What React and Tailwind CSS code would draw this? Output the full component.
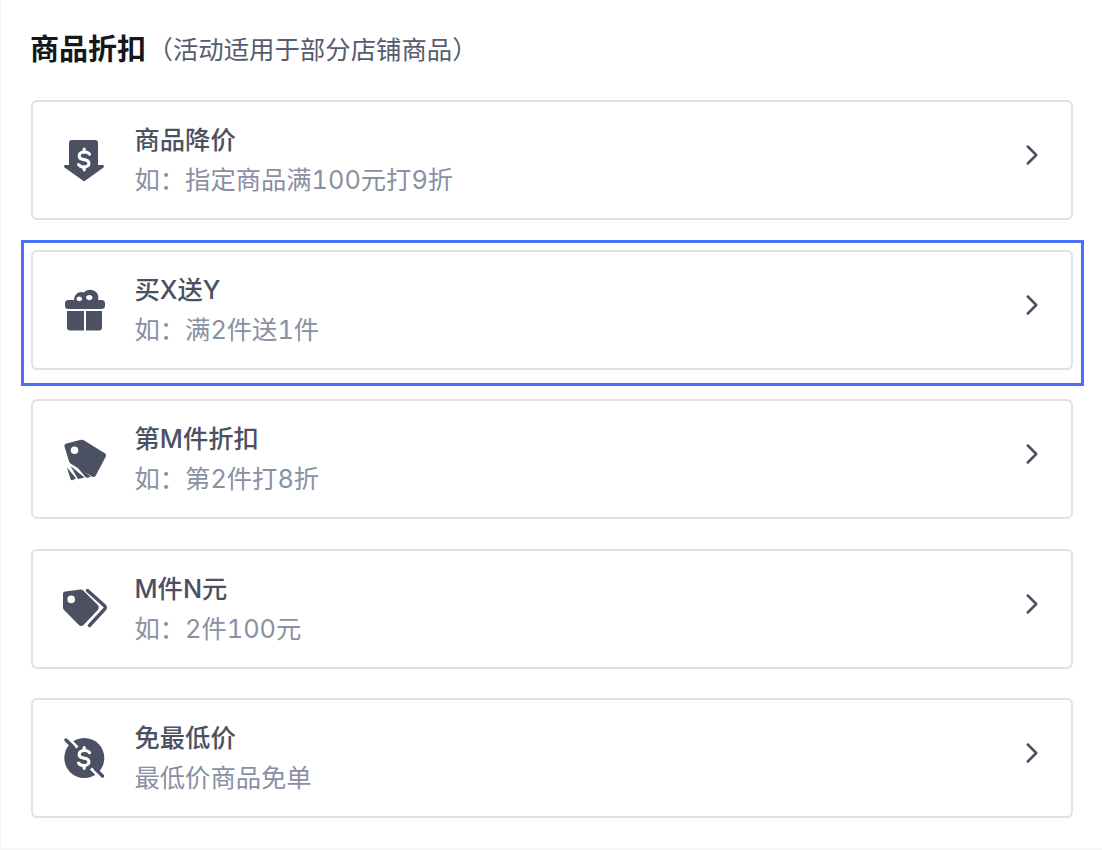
import { ChevronRight } from 'lucide-react'

const DollarMark = ({ cx, cy, color = '#fff' }) => (
  <g transform={`translate(${cx - 7} ${cy - 11.5})`} fill="none" stroke={color} strokeWidth="3.200" strokeLinecap="round" strokeLinejoin="round">
    <path d="M12.5 6.2C11.6 4.8 9.6 4 7.4 4 4.4 4 2.2 5.6 2.2 7.9c0 2.3 2 3.2 4.8 3.7 2.8.5 4.9 1.4 4.9 3.7 0 2.3-2.2 3.8-5 3.8-2.3 0-4.3-.9-5.3-2.4" />
    <path d="M7.2 1.2V4M7.2 19.1v2.7" />
  </g>
)

const PriceDownIcon = () => (
  <svg width="48" height="48" viewBox="0 0 48 48" fill="#4b5162">
    <path d="M12 4h23a3 3 0 0 1 3 3v22h4.500c1.300 0 1.900 1.500 1 2.400L25.500 44.500a2 2 0 0 1-2.600 0L4.500 31.400c-1-.9-.4-2.400 1-2.400H9V7a3 3 0 0 1 3-3z" />
    <DollarMark cx={24} cy={23.500} />
  </svg>
)

const GiftIcon = () => (
  <svg width="48" height="48" viewBox="0 0 48 48" fill="#4b5162">
    <path fillRule="evenodd" d="M8.500 14H14c.2-5.500 5-9.500 10-7.500C26.500 3.500 31 3 34.500 5c3.500 2 4.500 5.500 3.500 9h3.500a3.500 3.500 0 0 1 3.500 3.500v2a3.500 3.500 0 0 1-3.500 3.500h-33A3.500 3.500 0 0 1 5 19.500v-2A3.500 3.500 0 0 1 8.500 14zm10.800 1.200c1.500 0 2.800-1 2.800-2.400s-1.300-2.400-2.800-2.400-2.800 1-2.800 2.400 1.300 2.400 2.800 2.400zm10-1c1.800 0 3.200-1.100 3.200-2.600s-1.400-2.600-3.200-2.600-3.200 1.100-3.200 2.600 1.400 2.600 3.200 2.600z" />
    <path d="M7 25h17v19.500H10a3 3 0 0 1-3-3zM26 25h16v16.500a3 3 0 0 1-3 3H26z" />
  </svg>
)

const TagFanIcon = () => (
  <svg width="48" height="48" viewBox="0 0 48 48" fill="#4b5162">
    <path fillRule="evenodd" d="M6.500 8.500 21 4.800c1-.3 2-.1 2.800.5l21 13c1.200.8 1.600 2.300.9 3.500L35.800 40.500c-.8 1.400-2.500 1.900-3.900 1.100L10.500 28.500c-.7-.4-1.200-1.100-1.400-1.900L4.500 11.500c-.4-1.300.5-2.700 2-3zM14.500 19a3.800 3.800 0 1 0 0-7.600 3.800 3.800 0 0 0 0 7.600z" />
    <path d="M7 32.500 16 43.300l-3 1.700c-1 .5-2 .2-2.400-.8z" />
    <path d="m10.500 31 14 11.500-5 1.300c-.8.200-1.500 0-2-.6z" />
    <path d="m15 29.500 16 12.300-3.500.9c-.7.200-1.300 0-1.900-.4z" />
  </svg>
)

const TagPairIcon = () => (
  <svg width="48" height="48" viewBox="0 0 48 48" fill="#4b5162">
    <path fillRule="evenodd" d="M5 6.500 20.500 4.500c1-.1 2 .2 2.700.9L37.800 20c1.400 1.400 1.400 3.600 0 5L23.500 40c-1.300 1.300-3.300 1.300-4.600 0L4 25c-.7-.7-1-1.500-1-2.400V8.700c0-1.100.9-2 2-2.200zM11.200 18.200a3.800 3.800 0 1 0 0-7.600 3.800 3.800 0 0 0 0 7.600z" />
    <path d="m27.500 5.500 17 15.300c1 .9 1 2.600 0 3.500L29.500 40.500" fill="none" stroke="#4b5162" strokeWidth="3.400" strokeLinecap="round" />
  </svg>
)

const NoPriceIcon = () => (
  <svg width="48" height="48" viewBox="0 0 48 48">
    <circle cx="24.300" cy="24" r="20" fill="#4b5162" />
    <path d="M8.500 4.500 17.500 13.500M31 34.500 40 43.500" stroke="#fff" strokeWidth="3" />
    <path d="M6 6 13 13M35.500 35 42.500 42" stroke="#4b5162" strokeWidth="3.400" strokeLinecap="round" />
    <DollarMark cx={24} cy={24} />
  </svg>
)

const ITEMS = [
  { title: '商品降价', desc: '如：指定商品满100元打9折', Icon: PriceDownIcon },
  { title: '买X送Y', desc: '如：满2件送1件', Icon: GiftIcon, active: true },
  { title: '第M件折扣', desc: '如：第2件打8折', Icon: TagFanIcon },
  { title: 'M件N元', desc: '如：2件100元', Icon: TagPairIcon },
  { title: '免最低价', desc: '最低价商品免单', Icon: NoPriceIcon },
]

export default function App() {
  return (
    <div className="h-[850px] w-[1102px] overflow-hidden bg-[#f6f7f9] pb-[2px] pl-[1px] font-['Inter','Noto_Sans_CJK_SC',sans-serif]">
      <div className="h-[848px] bg-white pl-[30px] pr-[29px] pt-[30px]">
        {/* 标题 */}
        <div className="-ml-[1px] flex h-[40px] items-center leading-[40px]">
          <span className="text-[29px] font-semibold text-[#15171c]">商品折扣</span>
          <span className="ml-[1.500px] text-[25.400px] text-[#565c6c]">（活动适用于部分店铺商品）</span>
        </div>

        <div className="mt-[30px] flex flex-col gap-[29.500px]">
          {ITEMS.map(({ title, desc, Icon, active }) => (
            <div key={title} className="relative flex h-[120px] items-center rounded-[6px] border-2 border-[#dfe1ea] pl-[27px] pr-[22px]">
              {active && (
                <div className="pointer-events-none absolute -bottom-[18px] -left-[12.500px] -right-[13px] -top-[12px] border-[3px] border-[#4870f8]" />
              )}
              <Icon />
              <div className="ml-[26.500px] flex-1">
                <div className="text-[25.300px] font-medium leading-[40px] text-[#4b5162]">{title}</div>
                <div className="text-[25.300px] leading-[40px] tabular-nums text-[#8a90a3]">{desc}</div>
              </div>
              <ChevronRight size={34} strokeWidth={1.800} className="mb-[10px] text-[#4b5162]" />
            </div>
          ))}
        </div>
      </div>
    </div>
  )
}
